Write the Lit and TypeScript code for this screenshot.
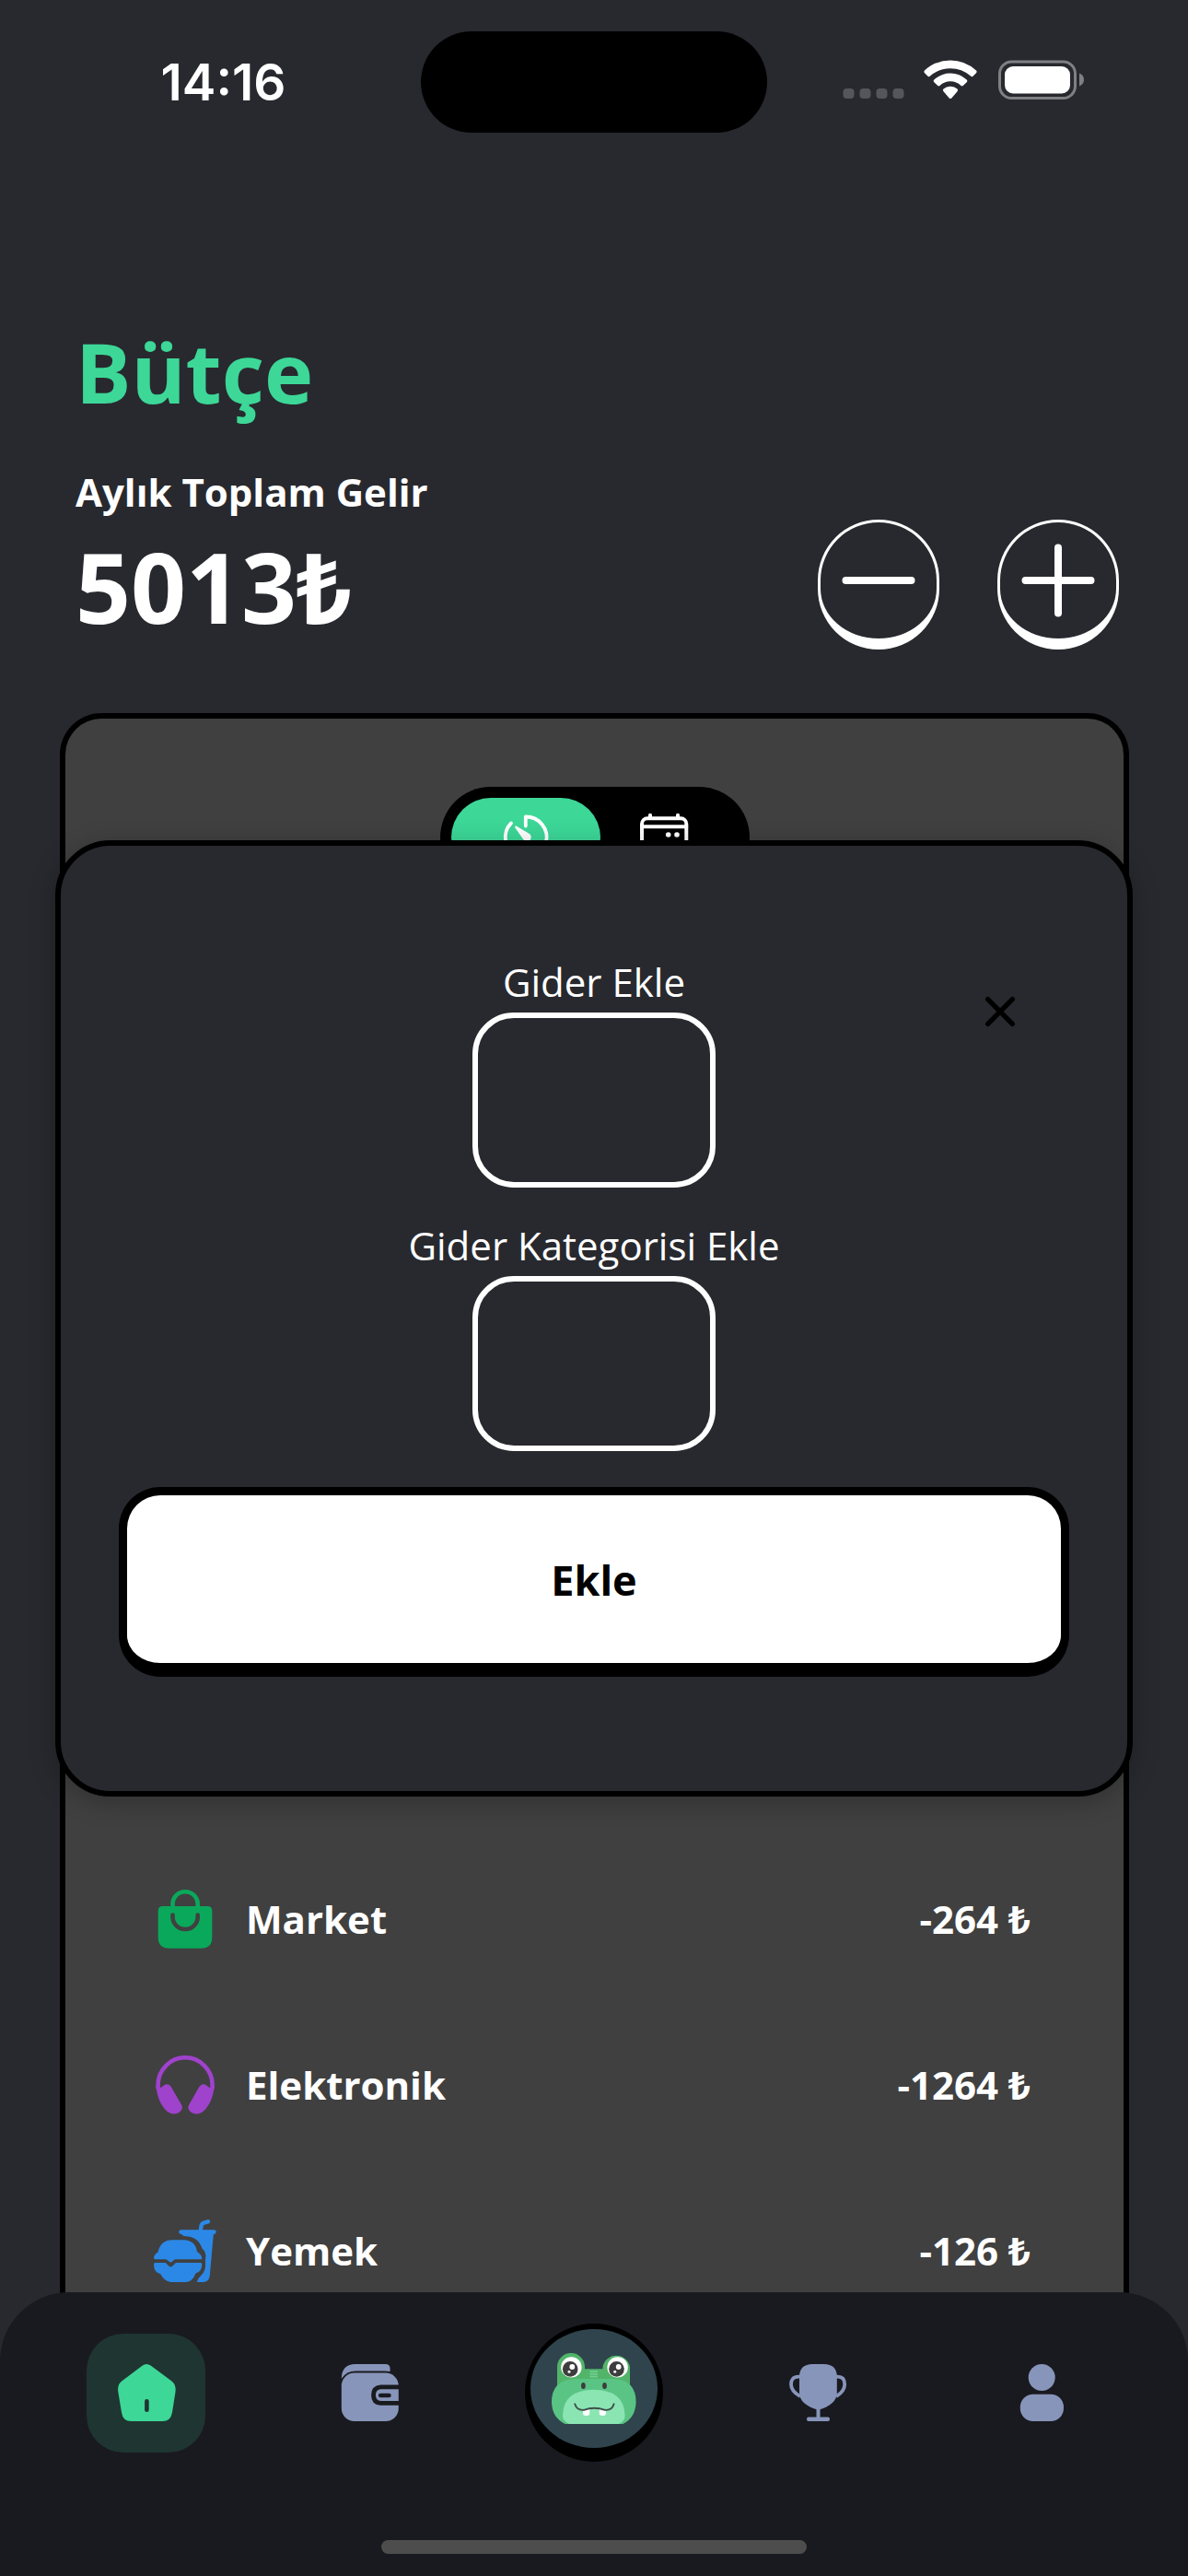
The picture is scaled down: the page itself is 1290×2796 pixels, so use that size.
import { LitElement, html, css, svg, TemplateResult, SVGTemplateResult } from "lit";
import { customElement, state } from "lit/decorators.js";

const icon = (size: number, body: SVGTemplateResult): TemplateResult =>
  html`<svg width=${size} height=${size} viewBox="0 0 ${size} ${size}" aria-hidden="true">${body}</svg>`;

const bagIcon = icon(72, svg`
  <path d="M11.7 22H60.3Q65.3 22 65.3 27V55.7Q65.3 67.7 53.3 67.7H18.7Q6.7 67.7 6.7 55.7V27Q6.7 22 11.7 22Z" fill="#0aa85b"/>
  <path d="M22.5 24V19.8A13.6 13.6 0 0 1 49.7 19.8V24" fill="none" stroke="#0aa85b" stroke-width="4.6"/>
  <path d="M22.5 31.6V33.4A13.6 13.6 0 0 0 49.7 33.4V31.6" fill="none" stroke="#404040" stroke-width="4.6" stroke-linecap="round"/>`);

const earCup = () => svg`<path d="M9 39.2L14.5 35.6Q18.5 34 20.8 38L32 57.5Q34.5 62 30 65.5Q24 69.5 17.5 65.5Q7 57.5 4.4 38Z" fill="#9f42cc"/>`;
const headphonesIcon = icon(72, svg`
  <path d="M6.6 40V36A29.5 29.7 0 0 1 65.6 36V40" fill="none" stroke="#9f42cc" stroke-width="4.6"/>
  ${earCup()}<g transform="matrix(-1 0 0 1 72.2 0)">${earCup()}</g>`);

const foodIcon = icon(72, svg`
  <g fill="#2c88e6">
    <path d="M3.5 45.3Q2 45.3 2 43.5Q2.4 40 6.5 37.5Q9.5 24.4 22 24.3H34.5Q47 24.6 49 37Q54.3 40.5 54.3 44.3Q54.3 45.3 53 45.3H25L21.6 48Q20.3 49 19 48L15.4 45.3Z"/>
    <path d="M3.5 49H14.8L18.6 52.8Q20.3 54.3 22 52.8L26 49H53Q54.3 49 54.3 50.5Q54.3 59 47.5 60.5Q44 70 36 70H20.5Q12.5 68.5 9.2 61Q2 59.5 2 51Q2 49 3.5 49Z"/>
    <rect x="29.3" y="13.2" width="40.4" height="4.8" rx="2.4"/>
    <path d="M32 17H66.9L62.8 63Q62 70 55.5 70H48.7Q50 65.5 53.5 62.5Q58.5 58 58 50Q57.5 46 58.3 43.5Q59 37.5 54.5 33.5Q50 20.7 36.5 20.3Q32.5 20 32 17Z"/>
    <path d="M52.6 15L53.6 8.6Q54.2 6.3 56.5 5.6L61 4.3" fill="none" stroke="#2c88e6" stroke-width="4.4" stroke-linecap="round"/>
  </g>`);

const clockIcon = icon(60, svg`
  <path d="M29.8 17.5V7.5A22.4 22.4 0 1 1 14 14.4" fill="none" stroke="#fff" stroke-width="3.8" stroke-linecap="round" stroke-linejoin="round"/>
  <path d="M18.2 19.2L27 31.7A4.6 4.6 0 1 0 33 25.5L19.6 17.6Q17.6 17 18.2 19.2Z" fill="#fff"/>`);

const calendarIcon = icon(60, svg`
  <g fill="none" stroke="#fff" stroke-width="4" stroke-linecap="round">
    <rect x="6" y="9.3" width="48.3" height="44" rx="6"/>
    <path d="M6 18.3H54.3M15 5.8V9M45 5.8V9"/>
  </g>
  <g fill="#fff"><circle cx="34.7" cy="27" r="2.8"/><circle cx="44" cy="27" r="2.8"/></g>`);

const homeIcon = icon(72, svg`
  <path d="M31.8 6.5Q36 3.4 40.6 6.5L63.5 23.5Q68.4 27.5 67.6 34.5L64 57.5Q62.4 67 53.5 67H19.5Q10.4 67 9 57.5L5.2 34.5Q4.2 27.5 9.2 23.5Z" fill="#3dd798"/>
  <path d="M36.4 45.3V54.7" stroke="#1f3531" stroke-width="4.6" stroke-linecap="round"/>`);

const walletIcon = icon(72, svg`
  <path d="M4.8 20.8Q5 5 20 5H52.5Q57.6 5 57.6 10V12.9Q55 12.4 51 12.4H20.5Q10 12.4 4.8 20.8Z" fill="#8895ba"/>
  <rect x="4.8" y="14.6" width="62" height="52.4" rx="14" fill="#8895ba"/>
  <path d="M68 29.9H47.5Q39.5 30.5 39.5 38.7Q39.5 46.9 47.5 47.4H68" fill="none" stroke="#191a1f" stroke-width="4.8"/>
  <path d="M47.2 39H56.4" stroke="#191a1f" stroke-width="4.6" stroke-linecap="round"/>`);

const trophyIcon = icon(72, svg`
  <path d="M30.5 5H42.5Q56.8 5 56.8 19V36Q56.8 49 36.5 54.7Q16 49 16 36V19Q16 5 30.5 5Z" fill="#8895ba"/>
  <path d="M17 18.7H15Q7 18.7 7 27Q7 34.5 17 40M56 18.7H57.5Q65.2 18.7 65.2 27Q65.2 34.5 56 40" fill="none" stroke="#8895ba" stroke-width="3.8"/>
  <path d="M36.5 52V65" stroke="#8895ba" stroke-width="4"/>
  <rect x="24" y="62.5" width="25" height="4.5" rx="2" fill="#8895ba"/>`);

const userIcon = icon(72, svg`
  <circle cx="36.2" cy="19.5" r="14.5" fill="#8895ba"/>
  <rect x="12.8" y="37.7" width="47.2" height="29.3" rx="14" fill="#8895ba"/>`);

const crocodile = html`<svg width="92" height="77" viewBox="0 0 92 77" aria-hidden="true">
  <path d="M6 60V15A15 15 0 0 1 36 15V17.3H55.5V15A15 15 0 0 1 85 15V60Z" fill="#52b469"/>
  <g fill="#6fd093"><rect x="41.5" y="19.3" width="8.5" height="1.7"/><rect x="41.5" y="22" width="8.5" height="1.7"/><rect x="41.5" y="24.7" width="8.5" height="1.7"/></g>
  <g fill="#fff"><circle cx="21.4" cy="15.4" r="11.2"/><circle cx="71.6" cy="15.4" r="11.2"/></g>
  <g fill="#3d3d3d"><circle cx="20.2" cy="17.4" r="8.3"/><circle cx="70.5" cy="17.4" r="8.3"/></g>
  <g fill="#fff"><circle cx="22.3" cy="15" r="2.9"/><circle cx="19" cy="20.3" r="1.5"/><circle cx="72.7" cy="15" r="2.9"/><circle cx="68.7" cy="20.3" r="1.5"/></g>
  <path d="M26 28H66Q91.6 28.5 91.6 53.5Q91 70 77.5 77H14.5Q.5 70 0 53.5Q0 28.5 26 28Z" fill="#5ac484"/>
  <path d="M12 68Q12.5 40 45.7 39.7Q79 40 79.6 68Q79.6 74 73 77H19Q12 74 12 68Z" fill="#8ae5b3"/>
  <g fill="#3d3d3d"><ellipse cx="34.4" cy="35.4" rx="2.4" ry="3.5"/><ellipse cx="57.5" cy="35.4" rx="2.4" ry="3.5"/></g>
  <g fill="#fff"><path d="M34 61H41.3V65.5Q41.3 68 37.6 68Q34 68 34 65.5ZM51.8 61H59V65.5Q59 68 55.4 68Q51.8 68 51.8 65.5Z"/></g>
  <path d="M25.2 55.3Q27.5 62.5 35 61.8Q46 57.8 58 61.8Q65.5 62.5 67.6 55.3" fill="none" stroke="#3f4f48" stroke-width="1.9" stroke-linecap="round"/>
</svg>`;

interface Expense { name: string; amount: string; icon: TemplateResult; }

const expenses: Expense[] = [
  { name: "Market", amount: "-264 ₺", icon: bagIcon },
  { name: "Elektronik", amount: "-1264 ₺", icon: headphonesIcon },
  { name: "Yemek", amount: "-126 ₺", icon: foodIcon },
];

@customElement("status-bar")
export class StatusBar extends LitElement {
  static styles = css`
    :host { display: grid; grid-template-columns: 1fr 376px 1fr; align-items: center; padding-top: 34px; }
    .time { font: 600 55px/64px Inter, sans-serif; color: #fff; text-align: center; padding-left: 28px; }
    .island { height: 110px; border-radius: 55px; background: #000; }
    .signals { display: flex; justify-content: flex-end; padding: 0 112px 4px 0; }
    svg { display: block; }
  `;
  render() {
    return html`
      <div class="time">14:16</div>
      <div class="island"></div>
      <div class="signals">
        <svg width="264" height="44" viewBox="0 0 264 44" aria-hidden="true">
          <g fill="#55565a">
            <rect x="1.5" y="31" width="12" height="11" rx="4"/><rect x="19.5" y="31" width="12" height="11" rx="4"/>
            <rect x="37.5" y="31" width="12" height="11" rx="4"/><rect x="55.5" y="31" width="12" height="11" rx="4"/>
          </g>
          <g fill="#fff">
            <path d="M118 0.5Q134 0.5 146 11.5Q147.3 12.8 146 14.2L142.5 17.7Q141.3 18.8 140 17.6Q130.5 9.3 118 9.3Q105.5 9.3 96 17.6Q94.7 18.8 93.5 17.7L90 14.2Q88.7 12.8 90 11.5Q102 .5 118 .5Z"/>
            <path d="M118 14.5Q128 14.5 135.7 21.5Q137 22.8 135.7 24.2L132 27.8Q130.8 28.9 129.5 27.9Q124.5 23.3 118 23.3Q111.5 23.3 106.5 27.9Q105.2 28.9 104 27.8L100.3 24.2Q99 22.8 100.3 21.5Q108 14.5 118 14.5Z"/>
            <path d="M118 28.8Q122.5 28.8 125.5 31.5Q126.8 32.8 125.5 34.2L119.3 41.5Q118 42.7 116.7 41.5L110.5 34.2Q109.2 32.8 110.5 31.5Q113.5 28.8 118 28.8Z"/>
          </g>
          <rect x="171.5" y="2" width="82" height="39.5" rx="13" fill="none" stroke="#7f8084" stroke-width="3"/>
          <rect x="177" y="7" width="71" height="29.5" rx="9" fill="#fff"/>
          <path d="M258 14.5Q263 16.5 263 21.5Q263 26.5 258 28.5Z" fill="#7f8084"/>
        </svg>
      </div>`;
  }
}

@customElement("tab-bar")
export class TabBar extends LitElement {
  static styles = css`
    :host { display: block; background: #191a1f; border-radius: 75px 75px 0 0; padding: 34px 37px 24px; }
    nav { display: flex; align-items: center; }
    .slot { flex: 1; display: flex; justify-content: center; }
    .tab { display: grid; place-content: center; width: 129px; height: 129px; border-radius: 40px; }
    .active { background: #1f3531; }
    .mascot { display: grid; place-content: center; box-sizing: border-box; width: 150px; height: 150px;
      border-radius: 50%; border: 6px solid #000; border-bottom-width: 15px; background: #000; }
    .face { display: grid; place-content: center; width: 138px; height: 129px; border-radius: 50%; background: #2f444d; }
    .handle { width: 462px; height: 15px; border-radius: 8px; background: #4d4d4d; margin: 85px auto 0; }
    svg { display: block; }
  `;
  render() {
    const tab = (label: string, glyph: TemplateResult, active = false) =>
      html`<div class="slot"><a class="tab ${active ? "active" : ""}" href="#" aria-label=${label}>${glyph}</a></div>`;
    return html`
      <nav>
        ${tab("Bütçe", homeIcon, true)}
        ${tab("Cüzdan", walletIcon)}
        <div class="slot"><a class="mascot" href="#" aria-label="Timsah"><span class="face">${crocodile}</span></a></div>
        ${tab("Başarılar", trophyIcon)}
        ${tab("Profil", userIcon)}
      </nav>
      <div class="handle"></div>`;
  }
}

@customElement("expense-dialog")
export class ExpenseDialog extends LitElement {
  static styles = css`
    :host { display: block; position: relative; box-sizing: border-box; width: 100%; padding: 119px 63px 124px;
      border: 6px solid #000; border-radius: 60px; background: #28292e; box-shadow: 0 6px 28px rgba(0, 0, 0, 0.25); }
    form { display: flex; flex-direction: column; align-items: center; }
    label { margin-bottom: 4px; font-size: 42px; line-height: 58px; color: #fff; }
    input { box-sizing: border-box; width: 264px; height: 190px; padding: 0 30px; border: 6px solid #fff; border-radius: 45px;
      background: transparent; color: #fff; font: inherit; font-size: 42px; text-align: center; outline: none; }
    .first { margin-bottom: 34px; }
    .submit { align-self: stretch; margin-top: 39px; height: 206px; box-sizing: border-box; border: 9px solid #000;
      border-bottom-width: 15px; border-radius: 45px; background: #fff; color: #000; font: inherit; font-weight: 700; font-size: 45px; }
    .close { position: absolute; top: 144px; right: 102px; width: 72px; height: 72px; padding: 0; border: 0; background: none; }
    svg { display: block; }
  `;
  render() {
    return html`
      <form @submit=${(e: Event) => e.preventDefault()}>
        <label for="amount">Gider Ekle</label>
        <input class="first" id="amount" type="text" inputmode="decimal">
        <label for="category">Gider Kategorisi Ekle</label>
        <input id="category" type="text">
        <button class="submit" type="submit">Ekle</button>
      </form>
      <button class="close" type="button" aria-label="Kapat"
        @click=${() => this.dispatchEvent(new CustomEvent("close"))}>
        ${icon(72, svg`<path d="M22.7 22.7L49.3 49.3M49.3 22.7L22.7 49.3" stroke="#000" stroke-width="5.4" stroke-linecap="round"/>`)}
      </button>`;
  }
}

@customElement("app-root")
export class AppRoot extends LitElement {
  @state() private dialogOpen = true;

  static styles = css`
    :host { display: flex; flex-direction: column; position: relative; height: 100vh; overflow: hidden;
      background: #28292e; color: #fff; font-family: "Open Sans", "Noto Sans", sans-serif; }
    header { padding: 198px 75px 66px 82px; }
    h1 { margin: 0 0 41px; font-size: 90px; line-height: 122px; font-weight: 700; color: #3dd798; }
    .income { display: flex; justify-content: space-between; align-items: flex-end; }
    .caption { margin-bottom: 2px; font-size: 42px; line-height: 58px; font-weight: 700; }
    .total { font-size: 105px; line-height: 143px; font-weight: 700; }
    .actions { display: flex; gap: 63px; padding-bottom: 3px; }
    .round { box-sizing: border-box; width: 132px; height: 141px; padding: 0; border: 3px solid #fff; border-bottom-width: 12px;
      border-radius: 66px; background: none; display: grid; place-content: center; }
    svg { display: block; }
    main { flex: 1; min-height: 0; overflow: hidden; margin: 0 64px -75px 65px; border: 6px solid #000; border-bottom: 0;
      border-radius: 45px 45px 0 0; background: #404040; padding-top: 74px; }
    .period { display: flex; width: 300px; margin: 0 auto; padding: 12px 24px 12px 12px; border-radius: 56px; background: #000; }
    .period button { flex: 138; height: 86px; padding: 0; border: 0; background: none; display: grid; place-content: center; border-radius: 43px; }
    .period .selected { flex: 162; background: #3dd798; }
    ul { list-style: none; margin: 1029px 0 0; padding: 0 101px 0 94px; }
    li { display: flex; align-items: center; gap: 30px; height: 180px; font-size: 42px; line-height: 60px; font-weight: 700; }
    .amount { margin-left: auto; }
    tab-bar { z-index: 2; }
    .overlay { position: absolute; inset: 0; z-index: 1; display: flex; align-items: center; padding: 66px 60px 0; }
  `;

  render() {
    return html`
      <status-bar></status-bar>
      <header>
        <h1>Bütçe</h1>
        <div class="income">
          <div>
            <div class="caption">Aylık Toplam Gelir</div>
            <div class="total">5013₺</div>
          </div>
          <div class="actions">
            <button class="round" aria-label="Gider ekle" @click=${() => (this.dialogOpen = true)}>
              ${icon(96, svg`<path d="M12.5 48H83.5" stroke="#fff" stroke-width="8" stroke-linecap="round"/>`)}
            </button>
            <button class="round" aria-label="Gelir ekle">
              ${icon(96, svg`<path d="M12.5 48H83.5M48 12.5V83.5" stroke="#fff" stroke-width="8" stroke-linecap="round"/>`)}
            </button>
          </div>
        </div>
      </header>
      <main>
        <div class="period">
          <button class="selected" aria-label="Günlük" aria-pressed="true">${clockIcon}</button>
          <button aria-label="Aylık" aria-pressed="false">${calendarIcon}</button>
        </div>
        <ul>
          ${expenses.map((e) => html`<li>${e.icon}<span>${e.name}</span><span class="amount">${e.amount}</span></li>`)}
        </ul>
      </main>
      ${this.dialogOpen
        ? html`<div class="overlay"><expense-dialog @close=${() => (this.dialogOpen = false)}></expense-dialog></div>`
        : null}
      <tab-bar></tab-bar>`;
  }
}
